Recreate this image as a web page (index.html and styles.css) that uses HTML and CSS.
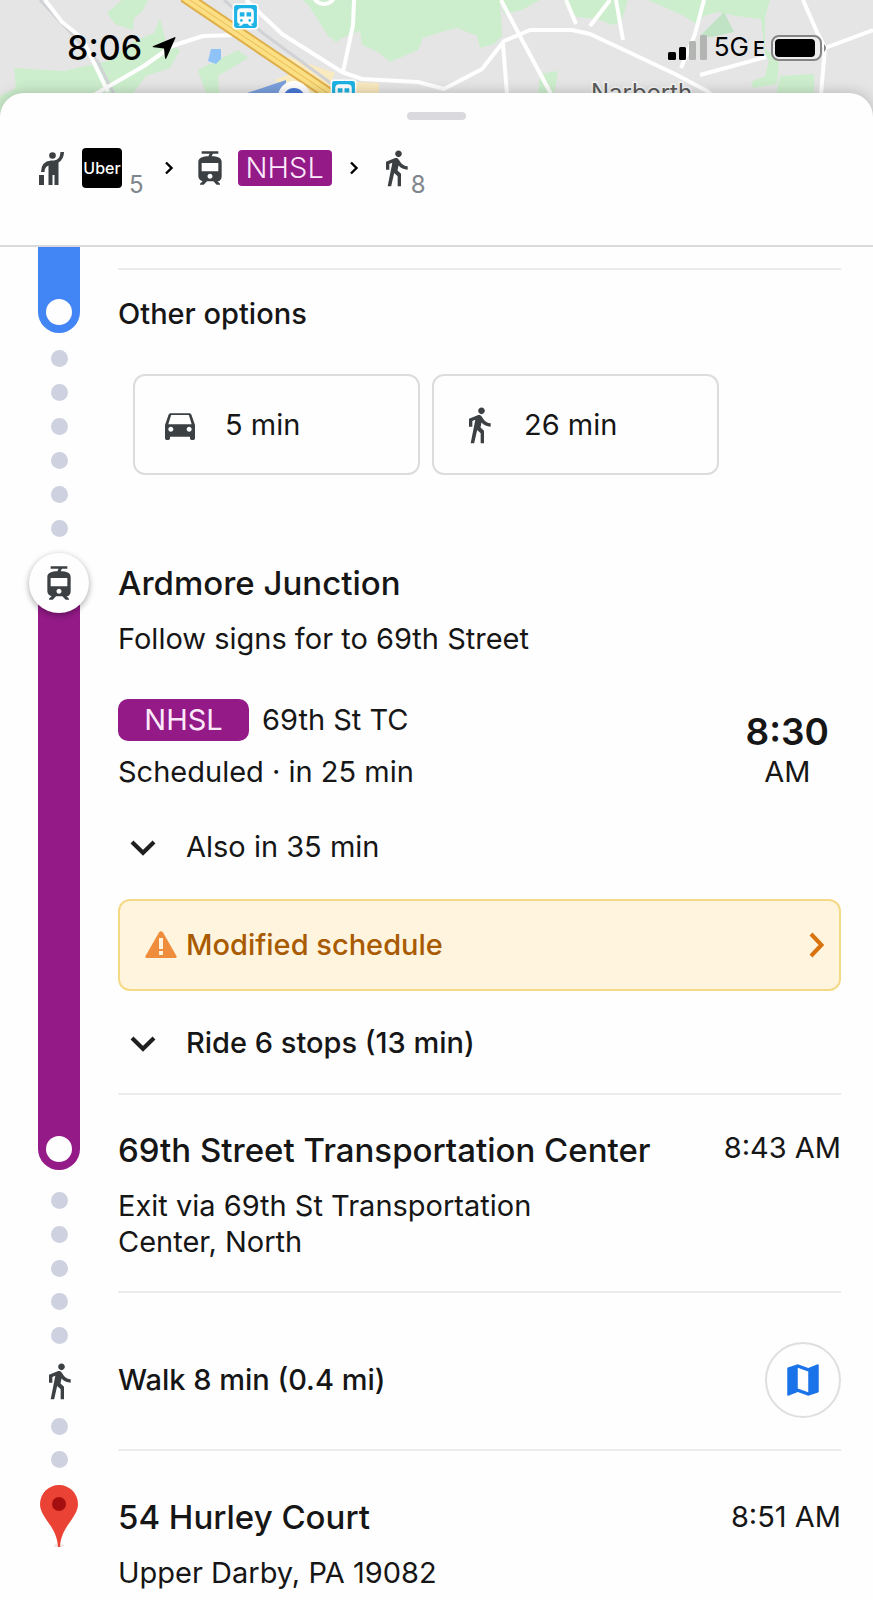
FILE: index.html
```html
<!DOCTYPE html>
<html lang="en">
<head>
<meta charset="utf-8">
<meta name="viewport" content="width=device-width, initial-scale=1">
<title>Trip to 54 Hurley Court</title>
<link rel="stylesheet" href="styles.css">
</head>
<body>
<svg class="sprite" aria-hidden="true">
  <symbol id="i-walk" viewBox="0 0 24 24"><path d="M13.5 5.5c1.1 0 2-.9 2-2s-.9-2-2-2-2 .9-2 2 .9 2 2 2zM9.8 8.9L7 23h2.1l1.8-8 2.1 2v6h2v-7.5l-2.1-2 .6-3C14.8 12 16.8 13 19 13v-2c-1.9 0-3.5-1-4.3-2.4l-1-1.6c-.4-.6-1-1-1.7-1-.3 0-.5.1-.8.1L6 8.3V13h2V9.6l1.8-.7"/></symbol>
  <symbol id="i-car" viewBox="0 0 24 24"><path fill-rule="evenodd" d="M18.92 6.01C18.72 5.42 18.16 5 17.5 5h-11c-.66 0-1.21.42-1.42 1.01L3 12v8c0 .55.45 1 1 1h1c.55 0 1-.45 1-1v-1h12v1c0 .55.45 1 1 1h1c.55 0 1-.45 1-1v-8l-2.08-5.99zM6.5 16c-.83 0-1.5-.67-1.5-1.5S5.67 13 6.5 13s1.5.67 1.5 1.5S7.33 16 6.5 16zm11 0c-.83 0-1.5-.67-1.5-1.5s.67-1.5 1.5-1.5 1.5.67 1.5 1.5-.67 1.5-1.5 1.5zM5 11.5l1.7-5.5h10.6L19 11.5H5z"/></symbol>
  <symbol id="i-tram" viewBox="0 0 24 24"><path fill-rule="evenodd" d="M19 16.94V8.5c0-2.79-2.61-3.4-6.01-3.49l.76-1.51H17V2H7v1.5h4.75l-.76 1.52C7.86 5.11 5 5.73 5 8.5v8.44c0 1.45 1.19 2.66 2.59 2.97L6 21.5v.5h2.23l2-2H14l2 2h2v-.5L16.5 20h-.08c1.69 0 2.58-1.37 2.58-3.06zm-7 1.56c-.83 0-1.5-.67-1.5-1.5s.67-1.5 1.5-1.5 1.5.67 1.5 1.5-.67 1.5-1.5 1.5zm5-4.5H7V9h10v5z"/></symbol>
  <symbol id="i-next" viewBox="0 0 10 16"><path d="M2 2.5L7.5 8L2 13.5" fill="none" stroke="currentColor" stroke-width="2.4"/></symbol>
  <symbol id="i-down" viewBox="0 0 40 40"><path d="M9 15L20 25.7L31 15" fill="none" stroke="currentColor" stroke-width="4.2"/></symbol>
  <symbol id="i-train" viewBox="0 0 26 26"><rect x=".5" y=".5" width="25" height="25" rx="3" fill="#fff"/><rect x="2" y="2" width="22" height="22" rx="2" fill="#1db3e4"/><path fill="#fff" fill-rule="evenodd" d="M9 5h8q4 0 4 4v8q0 3-3 3l2 2h-3l-2-2h-4l-2 2H6l2-2q-3 0-3-3V9q0-4 4-4zM7.500 9h4.500v4H7.500zM14 9h4.500v4H14zM9 15.500a1.300 1.300 0 1 0 .1 0zM17 15.500a1.300 1.300 0 1 0 .1 0z"/></symbol>
</svg>

<header class="top">
  <svg class="map" viewBox="0 0 873 124" preserveAspectRatio="xMidYMin slice" aria-hidden="true">
    <rect width="873" height="124" fill="#e5e5e5"/>
    <g fill="#cdeecd">
      <path d="M122 0h26l-6 12-8 6-1 12-18-6-8-11z"/>
      <path d="M160 18l6 24 14 8-10 18-24 8-30 40H0V96l16-8-2-20 50 3 44-10 26-20 20-8z"/>
      <path d="M302 0h148l50 0 2 36-8 8-14 4-3-12-20-8-16 4-18 6-5 12-28 12-12-10-16-7-2-14-16 6-8 5-8-6-10-16-9-14z"/>
      <path d="M198 70l40-20 10 8-30 18 2 24-14-6z"/>
      <path d="M500 0h40l-18 10-18 4zM564 0h64l-7 22-8 3-16-6-20-2-11-10z"/>
      <path d="M648 0h122l-5 18v30l14 14-2 22-24 4-2-6 14-6 4-16-4-6-4-35-25-3-18-4-14 4-8 8-12-8z"/>
      <path d="M780 76l34-2v30h-40zM540 74l18-3-4 26-16-4z"/>
    </g>
    <path d="M724 12l10 20-22 5-12-1z" fill="#bfe3c4"/>
    <path d="M211 49h10v10l-5 5-8-3z" fill="#8fc2f7"/>
    <path d="M275 80l22-9-12-10 4-4 46 16-4 8 48 2v12H290z" fill="#faeac0"/>
    <path d="M40 0l58 62 20 40M224 0l40 34 68 50" fill="none" stroke="#d0d2d5" stroke-width="3"/>
    <g fill="none" stroke="#fff" stroke-width="4" stroke-linejoin="round">
      <path d="M45 0l17 22 20 16 26 54M92 96l52-30 28-20 31-10 34-1M246 0l36 34 60 38 20 7 56 3 26 7 38-20 22-28 26-11h42l18 4 30 14 55 26 32 17 18 14M354 0l-1 25-10 47M501 0l20 38 30 56M503 44l4 50M566 0l10 24M610 0l-20 26M616 0l7 40M704 0l-9 34-14 34M700 75l66-18M803 0l14 32 8 16-4 46M825 48l48-18"/>
      <path d="M314-4a10 8 0 0 0 20 0"/>
    </g>
    <path d="M184-4l148 100" stroke="#dfb04b" stroke-width="13"/>
    <path d="M184-4l148 100" stroke="#fbdf82" stroke-width="9"/>
    <path d="M184-4l148 100" stroke="#e7bd5a" stroke-width="1"/>
    <path d="M238 96l48-16v30h-40z" fill="#7ba0dd"/>
    <circle cx="294" cy="97" r="16" fill="#fff"/><circle cx="294" cy="99" r="11" fill="#4a79d8"/>
    <use href="#i-train" x="232" y="3" width="27" height="27"/>
    <use href="#i-train" x="330" y="79" width="27" height="27"/>
    <text class="place" x="591" y="101">Narberth</text>
  </svg>
  <div class="status">
    <div class="clock">8:06
      <svg class="locate" viewBox="0 0 24 24" aria-hidden="true"><path d="M22.500 1.200Q24 .6 23.300 2.300L14.500 22q-1 2-1.500 0L12 12.500 1.600 11.200q-2-.4-.2-1.300z"/></svg>
    </div>
    <div class="signal">
      <svg class="bars" viewBox="0 0 40 26" aria-hidden="true"><rect x="0" y="17" width="8" height="8" rx="1.500"/><rect x="11" y="12" width="7" height="13" rx="1.500"/><g fill="#b3b5b3"><rect x="21" y="6" width="7" height="19" rx="1.500"/><rect x="32" y="0" width="7" height="25" rx="1.500"/></g></svg>
      <span class="network">5G<small class="network-e">E</small></span>
      <svg class="battery" viewBox="0 0 56 26" aria-hidden="true"><rect x="1" y="1" width="49" height="24" rx="7" fill="#eee" stroke="#858585" stroke-width="2"/><rect x="4" y="4" width="40" height="18" rx="4"/><path d="M53 9q4 4 0 8z" fill="#858585"/></svg>
    </div>
  </div>
</header>

<main class="sheet">
  <section class="summary" aria-label="Trip summary">
    <div class="handle"></div>
    <div class="modes">
      <svg class="icon hail" viewBox="0 0 26 36" aria-label="Ride service" role="img"><circle cx="13.500" cy="5.500" r="3.300"/><path d="M21.500 2h3.500q0 7-5.500 10.500V35H15.500V25h-2v10H9.500V15.500Q5.500 17 5.500 22H2q0-10.500 10-11.500h3q6-.5 6.500-8.500zM0 25h5v10H0z"/></svg>
      <span class="uber">Uber</span>
      <span class="minutes">5</span>
      <svg class="next next-wide" aria-hidden="true"><use href="#i-next"/></svg>
      <svg class="icon" aria-label="Tram" role="img"><use href="#i-tram"/></svg>
      <span class="line line-small">NHSL</span>
      <svg class="next" aria-hidden="true"><use href="#i-next"/></svg>
      <svg class="icon" aria-label="Walk" role="img"><use href="#i-walk"/></svg>
      <span class="minutes minutes-tight">8</span>
    </div>
  </section>

  <ol class="steps">
    <li class="step">
      <div class="rail">
        <div class="bar bar-blue bar-end"><i class="stop"></i></div>
        <i class="dot"></i><i class="dot"></i><i class="dot"></i><i class="dot"></i><i class="dot"></i><i class="dot"></i>
      </div>
      <div class="body body-options">
        <h3 class="label">Other options</h3>
        <div class="options">
          <button class="option" type="button"><svg class="icon" aria-hidden="true"><use href="#i-car"/></svg>5 min</button>
          <button class="option" type="button"><svg class="icon" aria-hidden="true"><use href="#i-walk"/></svg>26 min</button>
        </div>
      </div>
    </li>

    <li class="step">
      <div class="rail rail-flush">
        <div class="badge"><svg class="icon" aria-hidden="true"><use href="#i-tram"/></svg></div>
        <div class="bar bar-purple bar-through"></div>
      </div>
      <div class="body body-board">
        <h2 class="title">Ardmore Junction</h2>
        <p class="text">Follow signs for to 69th Street</p>
        <div class="departure">
          <div class="service">
            <div class="service-line"><span class="line line-large">NHSL</span><span>69th St TC</span></div>
            <p>Scheduled · in 25 min</p>
          </div>
          <div class="depart"><strong class="depart-time">8:30</strong><span>AM</span></div>
        </div>
        <button class="toggle toggle-also" type="button"><svg class="icon" aria-hidden="true"><use href="#i-down"/></svg>Also in 35 min</button>
        <button class="alert" type="button">
          <svg class="warn" viewBox="0 0 32 28" aria-hidden="true"><path d="M14 1.500q2-2.500 4 0l13.500 23.500q.8 2-1.500 2H2q-2.300 0-1.500-2z" fill="#f08d3c"/><path d="M14 7h4v11h-4zM14 20h4v4h-4z" fill="#fff4de"/></svg>
          <span class="alert-text">Modified schedule</span>
          <svg class="alert-go" viewBox="0 0 16 26" aria-hidden="true"><path d="M2 2L12.500 13L2 24" fill="none" stroke="currentColor" stroke-width="4"/></svg>
        </button>
        <button class="toggle toggle-ride" type="button"><svg class="icon" aria-hidden="true"><use href="#i-down"/></svg>Ride 6 stops (13 min)</button>
      </div>
    </li>

    <li class="step">
      <div class="rail">
        <div class="bar bar-purple bar-end bar-short"><i class="stop"></i></div>
        <i class="dot"></i><i class="dot"></i><i class="dot"></i>
      </div>
      <div class="body body-ruled body-exit">
        <div class="heading heading-top"><h2 class="title">69th Street Transportation Center</h2><time class="time">8:43 AM</time></div>
        <p class="text text-narrow">Exit via 69th St Transportation Center, North</p>
      </div>
    </li>

    <li class="step">
      <div class="rail rail-dotted">
        <i class="dot"></i><i class="dot"></i>
        <svg class="icon" aria-hidden="true"><use href="#i-walk"/></svg>
        <i class="dot"></i>
      </div>
      <div class="body body-ruled body-walk">
        <h3 class="label">Walk 8 min (0.4 mi)</h3>
        <button class="map-button" type="button" aria-label="Show on map"><svg viewBox="0 0 24 24"><path fill-rule="evenodd" d="M20.500 3l-.16.03L15 5.100 9 3 3.360 4.900c-.21.07-.36.25-.36.48V20.500c0 .28.22.5.5.5l.16-.03L9 18.900l6 2.100 5.640-1.900c.21-.07.36-.25.36-.48V3.500c0-.28-.22-.5-.5-.5zM15 19l-6-2.110V5l6 2.110V19z"/></svg></button>
      </div>
    </li>

    <li class="step">
      <div class="rail rail-dotted">
        <i class="dot"></i>
        <svg class="pin" viewBox="0 0 38 62" aria-hidden="true"><ellipse cx="19" cy="60.500" rx="5" ry="1.500" fill="#efe6e2"/><path d="M19 0a19 19 0 0 1 19 19c0 14-17 22-18 43h-2C17 41 0 33 0 19A19 19 0 0 1 19 0z" fill="#ea4335"/><circle cx="19" cy="19" r="7" fill="#a50e0e"/></svg>
      </div>
      <div class="body body-ruled body-end">
        <div class="heading"><h2 class="title">54 Hurley Court</h2><time class="time">8:51 AM</time></div>
        <p class="text">Upper Darby, PA 19082</p>
      </div>
    </li>
  </ol>
</main>
</body>
</html>
```

FILE: styles.css
```css
* { box-sizing: border-box; }
body {
  margin: 0;
  background: #fefefe;
  color: #161616;
  font: 400 29px/36px Inter, "Liberation Sans", sans-serif;
}
h2, h3, p, ol { margin: 0; padding: 0; font-weight: 400; font-size: inherit; }
ol { list-style: none; }
button { border: 0; background: none; color: inherit; font: inherit; text-align: left; padding: 0; cursor: pointer; }
svg { display: block; flex: none; }
.sprite { position: absolute; width: 0; height: 0; }
.icon { width: 40px; height: 40px; fill: #3c4043; }

/* Map strip and status bar */
.top { position: relative; height: 124px; overflow: hidden; background: #e5e5e5; }
.map { position: absolute; inset: 0; width: 100%; height: 100%; }
.place { font-size: 24px; fill: #5a5a5a; stroke: #f4f4f4; stroke-width: 3px; paint-order: stroke; }
.status { position: relative; display: flex; justify-content: space-between; padding: 28px 46px 0 67px; color: #000; }
.clock { display: flex; align-items: center; gap: 10px; height: 40px; font-size: 34px; font-weight: 500; }
.locate { width: 24px; height: 24px; }
.signal { display: flex; align-items: center; gap: 6px; height: 40px; }
.bars { width: 40px; height: 26px; }
.network { font-size: 26px; }
.network-e { margin-left: 4px; font-size: 20px; font-weight: 500; }
.battery { width: 56px; height: 26px; }

/* Sheet */
.sheet { position: relative; margin-top: -31px; border-radius: 24px 24px 0 0; background: #fefefe; box-shadow: 0 0 14px rgba(0, 0, 0, .22); }
.summary { padding: 19px 39px 52px; border-bottom: 2px solid #dadadc; }
.handle { width: 59px; height: 8px; margin: 0 auto 23px; border-radius: 4px; background: #d9d9de; }
.modes { display: flex; align-items: center; height: 50px; }
.hail { width: 26px; height: 36px; margin-right: 17px; }
.uber { width: 40px; height: 40px; border-radius: 4px; background: #000; color: #fff; font-size: 16px; font-weight: 500; line-height: 40px; text-align: center; }
.minutes { align-self: flex-end; margin-left: 7px; color: #80868b; font-size: 24px; line-height: 16px; }
.minutes-tight { margin-left: -5px; }
.next { width: 10px; height: 16px; margin: 0 17px; color: #000; }
.next-wide { margin: 0 16px 0 20px; }
.line { background: #931a87; color: #fbe9fa; text-align: center; }
.line-small { margin-left: 8px; padding: 0 8px; border-radius: 4px; font-weight: 300; }
.line-large { min-width: 131px; border-radius: 10px; line-height: 42px; }

/* Steps: rail on the left, details on the right */
.step { display: grid; grid-template-columns: 118px minmax(0, 1fr); padding-right: 32px; }
.rail { display: flex; flex-direction: column; align-items: center; gap: 17px; }
.rail-flush { gap: 0; }
.rail-dotted { padding-top: 2px; }
.bar { display: flex; flex-shrink: 0; align-items: flex-end; justify-content: center; width: 42px; }
.bar-blue { height: 86px; background: #4285f4; }
.bar-purple { background: #931a87; }
.bar-end { padding-bottom: 8px; border-radius: 0 0 21px 21px; }
.bar-short { height: 77px; margin-bottom: 5px; }
.bar-through { flex: 1; margin-top: -30px; }
.stop { width: 26px; height: 26px; border-radius: 50%; background: #fefefe; }
.dot { width: 17px; height: 17px; border-radius: 50%; background: #ced1df; }
.badge { z-index: 1; display: grid; flex-shrink: 0; place-items: center; width: 60px; height: 60px; border-radius: 50%; background: #fefefe; box-shadow: 0 2px 6px rgba(0, 0, 0, .35); }
.pin { width: 38px; height: 62px; }

.body-options { margin-top: 21px; padding: 26px 0 78px; border-top: 2px solid #ebebeb; }
.body-ruled { border-top: 2px solid #ebebeb; }
.body-board { padding-top: 10px; }
.body-exit { padding: 35px 0 31px; }
.body-walk { display: flex; align-items: center; justify-content: space-between; padding: 49px 0 31px; }
.body-end { padding: 46px 0 8px; }

.title { font-size: 33px; line-height: 40px; font-weight: 500; }
.label { font-weight: 500; }
.text { margin-top: 18px; }
.text-narrow { max-width: 440px; }
.heading { display: flex; align-items: center; justify-content: space-between; }
.heading-top { align-items: flex-start; }
.time { white-space: nowrap; }

.options { display: grid; grid-template-columns: 1fr 1fr; gap: 12px; margin: 42px 122px 0 15px; }
.option { display: flex; align-items: center; gap: 25px; height: 101px; padding-left: 25px; border: 2px solid #dcdcdf; border-radius: 12px; }

.departure { display: flex; justify-content: space-between; align-items: flex-end; margin-top: 42px; }
.service-line { display: flex; align-items: center; gap: 13px; margin-bottom: 13px; }
.depart { display: flex; flex-direction: column; align-items: center; padding-right: 12px; }
.depart-time { font-size: 37px; line-height: 44px; font-weight: 600; }
.toggle { display: flex; align-items: center; gap: 23px; width: 100%; height: 40px; padding-left: 5px; }
.toggle .icon { color: #1f1f1f; }
.toggle-also { margin: 37px 0 32px; }
.toggle-ride { margin: 32px 0 30px; font-weight: 500; }
.alert { display: flex; align-items: center; width: 100%; height: 92px; padding: 0 14px 0 25px; border: 2px solid #f4da86; border-radius: 12px; background: #fff4de; color: #a85b00; font-weight: 500; }
.warn { width: 32px; height: 28px; margin-right: 9px; }
.alert-text { flex: 1; }
.alert-go { width: 16px; height: 26px; color: #d9730d; }
.map-button { display: grid; place-items: center; width: 76px; height: 76px; border: 2px solid #dfdfe2; border-radius: 50%; }
.map-button svg { width: 42px; height: 42px; fill: #1a73e8; }
```
